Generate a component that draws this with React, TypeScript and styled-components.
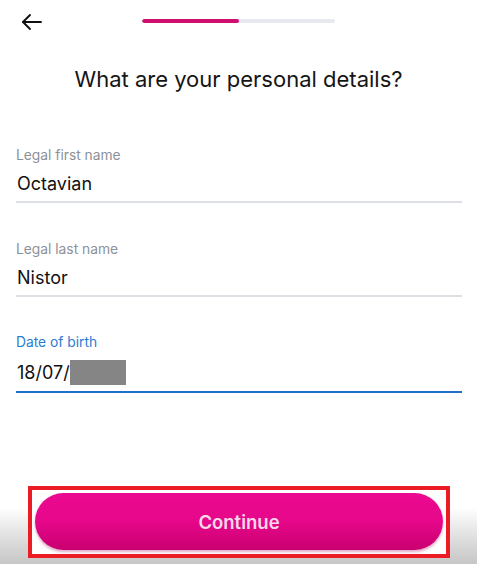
import styled, { createGlobalStyle } from 'styled-components';

const GlobalStyle = createGlobalStyle`
    html, body, #root {
        margin: 0;
        padding: 0;
        height: 100%;
    }
    body {
        background: #ffffff;
        font-family: Inter, "Noto Sans", sans-serif;
        color: #111111;
    }
`;

const Page = styled.div`
    display: flex;
    flex-direction: column;
    min-height: 100vh;
    box-sizing: border-box;
`;

const Header = styled.div`
    position: relative;
    height: 42px;
    display: flex;
    align-items: center;
    justify-content: center;
`;

const BackButton = styled.button`
    position: absolute;
    left: 20px;
    top: 10px;
    width: 24px;
    height: 24px;
    padding: 0;
    border: none;
    background: none;
    display: flex;
    align-items: center;
    justify-content: center;
    cursor: pointer;
`;

const Track = styled.div`
    width: 193px;
    height: 4px;
    border-radius: 2px;
    background: #e6eaee;
    overflow: hidden;
`;

const TrackFill = styled.div`
    height: 100%;
    background: #cf0f6f;
    border-radius: 2px;
`;

const Title = styled.h1`
    margin: 24px 0 0;
    font-size: 22px;
    line-height: 26px;
    font-weight: 400;
    text-align: center;
    color: #151515;
`;

const Form = styled.div`
    display: flex;
    flex-direction: column;
    gap: 37.5px;
    padding: 55px 15px 0 16px;
`;

const Field = styled.div<{ $active?: boolean }>`
    display: flex;
    flex-direction: column;
    gap: 10px;
    padding-bottom: 6px;
    border-bottom: ${p => (p.$active ? '2px solid #1f70c6' : '2px solid #dcdfe4')};
`;

const Label = styled.div<{ $active?: boolean }>`
    font-size: 13.8px;
    line-height: 16px;
    color: ${p => (p.$active ? '#2a7dd3' : '#8c9199')};
`;

const Value = styled.div`
    display: flex;
    align-items: center;
    font-size: 18px;
    line-height: 22px;
    color: #111111;
    padding-left: 1px;
`;

const Redacted = styled.span`
    display: inline-block;
    width: 56px;
    height: 25px;
    background: #858585;
`;

const Footer = styled.div`
    margin-top: auto;
    height: 94px;
    box-sizing: border-box;
    padding: 16px 27px 6px 28px;
    background: linear-gradient(to bottom, #ffffff 0%, #ffffff 40%, #dcdcdc 75%, #c6c6c6 100%);
`;

const Highlight = styled.div`
    border: 4px solid #ec1c24;
    padding: 3px 3px 4px;
    background: #ffffff;
`;

const ContinueButton = styled.button`
    width: 100%;
    height: 57px;
    border: none;
    border-radius: 29px;
    background: linear-gradient(to bottom, #ec0a90 0%, #e6078a 50%, #c9006f 100%);
    box-shadow: 0 2px 3px rgba(160, 0, 90, 0.35);
    color: #f7d8ea;
    font-family: Inter, "Noto Sans", sans-serif;
    font-size: 18.5px;
    font-weight: 600;
    cursor: pointer;
`;

const ArrowLeft = () => (
    <svg width="22" height="22" viewBox="0 0 22 22" fill="none" stroke="#111" strokeWidth="1.9" strokeLinecap="round" strokeLinejoin="round">
        <path d="M20 11H2" />
        <path d="M9 4L2 11l7 7" />
    </svg>
);

const App = () => {
    const progress = 50;
    return (
        <>
            <GlobalStyle />
            <Page>
                <Header>
                    <BackButton aria-label="Back">
                        <ArrowLeft />
                    </BackButton>
                    <Track>
                        <TrackFill style={{ width: `${progress}%` }} />
                    </Track>
                </Header>
                <Title>What are your personal details?</Title>
                <Form>
                    <Field>
                        <Label>Legal first name</Label>
                        <Value>Octavian</Value>
                    </Field>
                    <Field>
                        <Label>Legal last name</Label>
                        <Value>Nistor</Value>
                    </Field>
                    <Field $active>
                        <Label $active>Date of birth</Label>
                        <Value>
                            18/07/
                            <Redacted />
                        </Value>
                    </Field>
                </Form>
                <Footer>
                    <Highlight>
                        <ContinueButton>Continue</ContinueButton>
                    </Highlight>
                </Footer>
            </Page>
        </>
    );
};

export default App;
